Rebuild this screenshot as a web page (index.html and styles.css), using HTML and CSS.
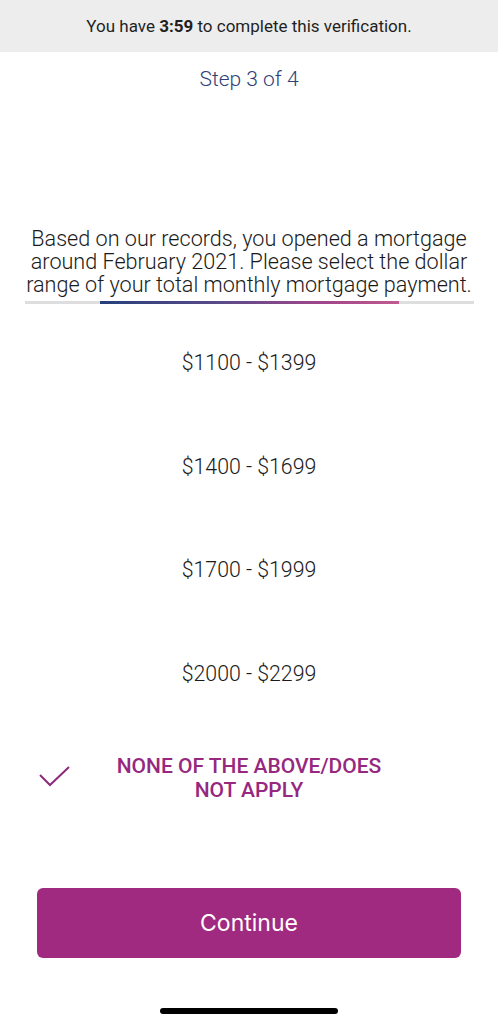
FILE: index.html
```html
<!DOCTYPE html>
<html>
<head>
<meta charset="utf-8">
<link rel="stylesheet" href="styles.css">
</head>
<body>
<div class="screen">
  <div class="timer"><span>You have <b>3:59</b> to complete this verification.</span></div>
  <div class="step">Step 3 of 4</div>
  <div class="question">Based on our records, you opened a mortgage around February 2021. Please select the dollar range of your total monthly mortgage payment.</div>
  <div class="progress"><div class="progress-fill"></div></div>
  <div class="options">
    <div class="option">$1100 - $1399</div>
    <div class="option">$1400 - $1699</div>
    <div class="option">$1700 - $1999</div>
    <div class="option">$2000 - $2299</div>
    <div class="option selected">
      <svg class="check" width="32" height="22" viewBox="0 0 32 22"><polyline points="1,10 11,20 30,2" fill="none" stroke="#8c2a7c" stroke-width="2"/></svg>
      <span class="selected-text">NONE OF THE ABOVE/DOES<br>NOT APPLY</span>
    </div>
  </div>
  <div class="actions">
    <button class="continue">Continue</button>
  </div>
  <div class="home"><div class="home-bar"></div></div>
</div>
</body>
</html>
```
FILE: styles.css
```css
html, body { margin: 0; padding: 0; background: #fff; }
.screen {
  width: 498px;
  height: 1024px;
  display: flex;
  flex-direction: column;
  font-family: Roboto, "Noto Sans", sans-serif;
  color: #1e1e1e;
}
.timer {
  height: 52px;
  background: #ededed;
  display: flex;
  align-items: center;
  justify-content: center;
  font-size: 17px;
  color: #1f1f1f;
}
.timer b { font-weight: 700; }
.step {
  height: 54px;
  display: flex;
  align-items: center;
  justify-content: center;
  font-size: 21px;
  font-weight: 300;
  color: #2f3f78;
}
.question {
  margin-top: 121px;
  padding: 0 16px;
  text-align: center;
  font-size: 21.6px;
  font-weight: 300;
  line-height: 23px;
  color: #1a1a1a;
}
.progress {
  margin: 5px 24px 0 25px;
  height: 3px;
  background: #dedede;
}
.progress-fill {
  margin-left: 75px;
  width: 299px;
  height: 3px;
  background: linear-gradient(to right, #26407a, #5a4a88 40%, #a2468a 75%, #c05a90);
}
.options {
  margin-top: 7px;
  display: flex;
  flex-direction: column;
}
.option {
  height: 103.6px;
  display: flex;
  align-items: center;
  justify-content: center;
  font-size: 21.3px;
  font-weight: 300;
  color: #1a1a1a;
}
.option.selected {
  position: relative;
  margin-top: 1px;
}
.check {
  position: absolute;
  left: 39px;
  top: 39px;
}
.selected-text {
  text-align: center;
  font-size: 21px;
  font-weight: 500;
  line-height: 24px;
  color: #962880;
}
.actions {
  margin-top: 58px;
  padding: 0 37px;
}
.continue {
  width: 100%;
  height: 70px;
  border: none;
  border-radius: 6px;
  background: #a02a80;
  color: #fff;
  font-family: Inter, "Liberation Sans", sans-serif;
  font-size: 23px;
  font-weight: 400;
  padding: 0;
}
.home {
  margin-top: 50px;
  display: flex;
  justify-content: center;
}
.home-bar {
  width: 178px;
  height: 6px;
  border-radius: 3px;
  background: #000;
}
```
